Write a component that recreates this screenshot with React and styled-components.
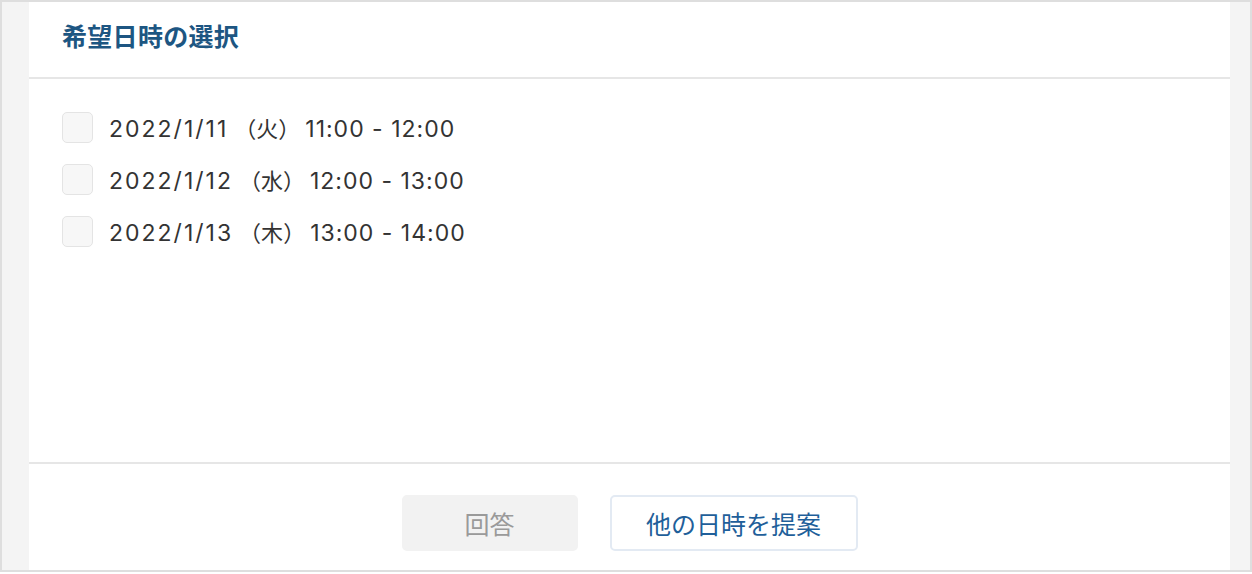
import React from "react";
import styled, { createGlobalStyle } from "styled-components";

const Global = createGlobalStyle`
  html, body { margin: 0; padding: 0; background: #ffffff; }
  body { font-family: "Noto Sans CJK JP", "Noto Sans", sans-serif; }
  * { box-sizing: border-box; }
`;

const Frame = styled.div`
  width: 1252px;
  height: 572px;
  border: 2px solid #dedede;
  background: #f4f4f4;
  padding: 0 20px 0 27px;
  display: flex;
`;

const Panel = styled.section`
  flex: 1;
  background: #ffffff;
  display: flex;
  flex-direction: column;
`;

const Header = styled.header`
  height: 77px;
  border-bottom: 2px solid #e6e6e6;
  display: flex;
  align-items: center;
  padding: 0 0 10px 33px;
`;

const Title = styled.h2`
  margin: 0;
  font-size: 25px;
  font-weight: 700;
  color: #1d5682;
  letter-spacing: 0.3px;
`;

const Body = styled.div`
  flex: 1;
  padding: 22px 0 0 33px;
  display: flex;
  flex-direction: column;
`;

const Option = styled.label`
  height: 52px;
  display: flex;
  align-items: center;
  gap: 16px;
  cursor: pointer;
`;

const Box = styled.span`
  width: 31px;
  height: 31px;
  border: 1.5px solid #e4e4e4;
  border-radius: 5px;
  background: #f7f7f7;
  flex: none;
`;

const OptionText = styled.span`
  font-family: "Inter", "Noto Sans CJK JP", sans-serif;
  font-size: 23px;
  line-height: 1;
  color: #333333;
  padding-top: 2px;
  white-space: pre;
`;

const Part = styled.span`
  letter-spacing: ${(p) => p.$spacing}px;
`;

const Weekday = styled.span`
  font-family: "Noto Sans CJK JP", sans-serif;
  font-size: 22px;
  letter-spacing: 0;
  padding: 0 5px 0 6px;
`;

const Footer = styled.footer`
  height: 108px;
  border-top: 2px solid #e6e6e6;
  display: flex;
  justify-content: center;
  align-items: flex-start;
  gap: 32px;
  padding-top: 31px;
`;

const Button = styled.button`
  height: 56px;
  width: ${(p) => p.$w}px;
  border-radius: 5px;
  font-family: inherit;
  font-size: 25px;
  border: 2px solid ${(p) => (p.$primary ? "#e3eaf3" : "#f2f2f2")};
  background: ${(p) => (p.$primary ? "#ffffff" : "#f2f2f2")};
  color: ${(p) => (p.$primary ? "#1f5f9a" : "#9a9a9a")};
  padding: 0;
`;

const options = [
  { date: "2022/1/11", day: "火", time: "11:00 - 12:00" },
  { date: "2022/1/12", day: "水", time: "12:00 - 13:00" },
  { date: "2022/1/13", day: "木", time: "13:00 - 14:00" },
];

export default function App() {
  return (
    <>
      <Global />
      <Frame>
        <Panel>
          <Header>
            <Title>希望日時の選択</Title>
          </Header>
          <Body>
            {options.map((o) => (
              <Option key={o.date}>
                <Box />
                <OptionText>
                  <Part $spacing={2}>{o.date}</Part>
                  <Weekday>（{o.day}）</Weekday>
                  <Part $spacing={1}>{o.time}</Part>
                </OptionText>
              </Option>
            ))}
          </Body>
          <Footer>
            <Button $w={176} disabled>回答</Button>
            <Button $w={248} $primary>他の日時を提案</Button>
          </Footer>
        </Panel>
      </Frame>
    </>
  );
}
